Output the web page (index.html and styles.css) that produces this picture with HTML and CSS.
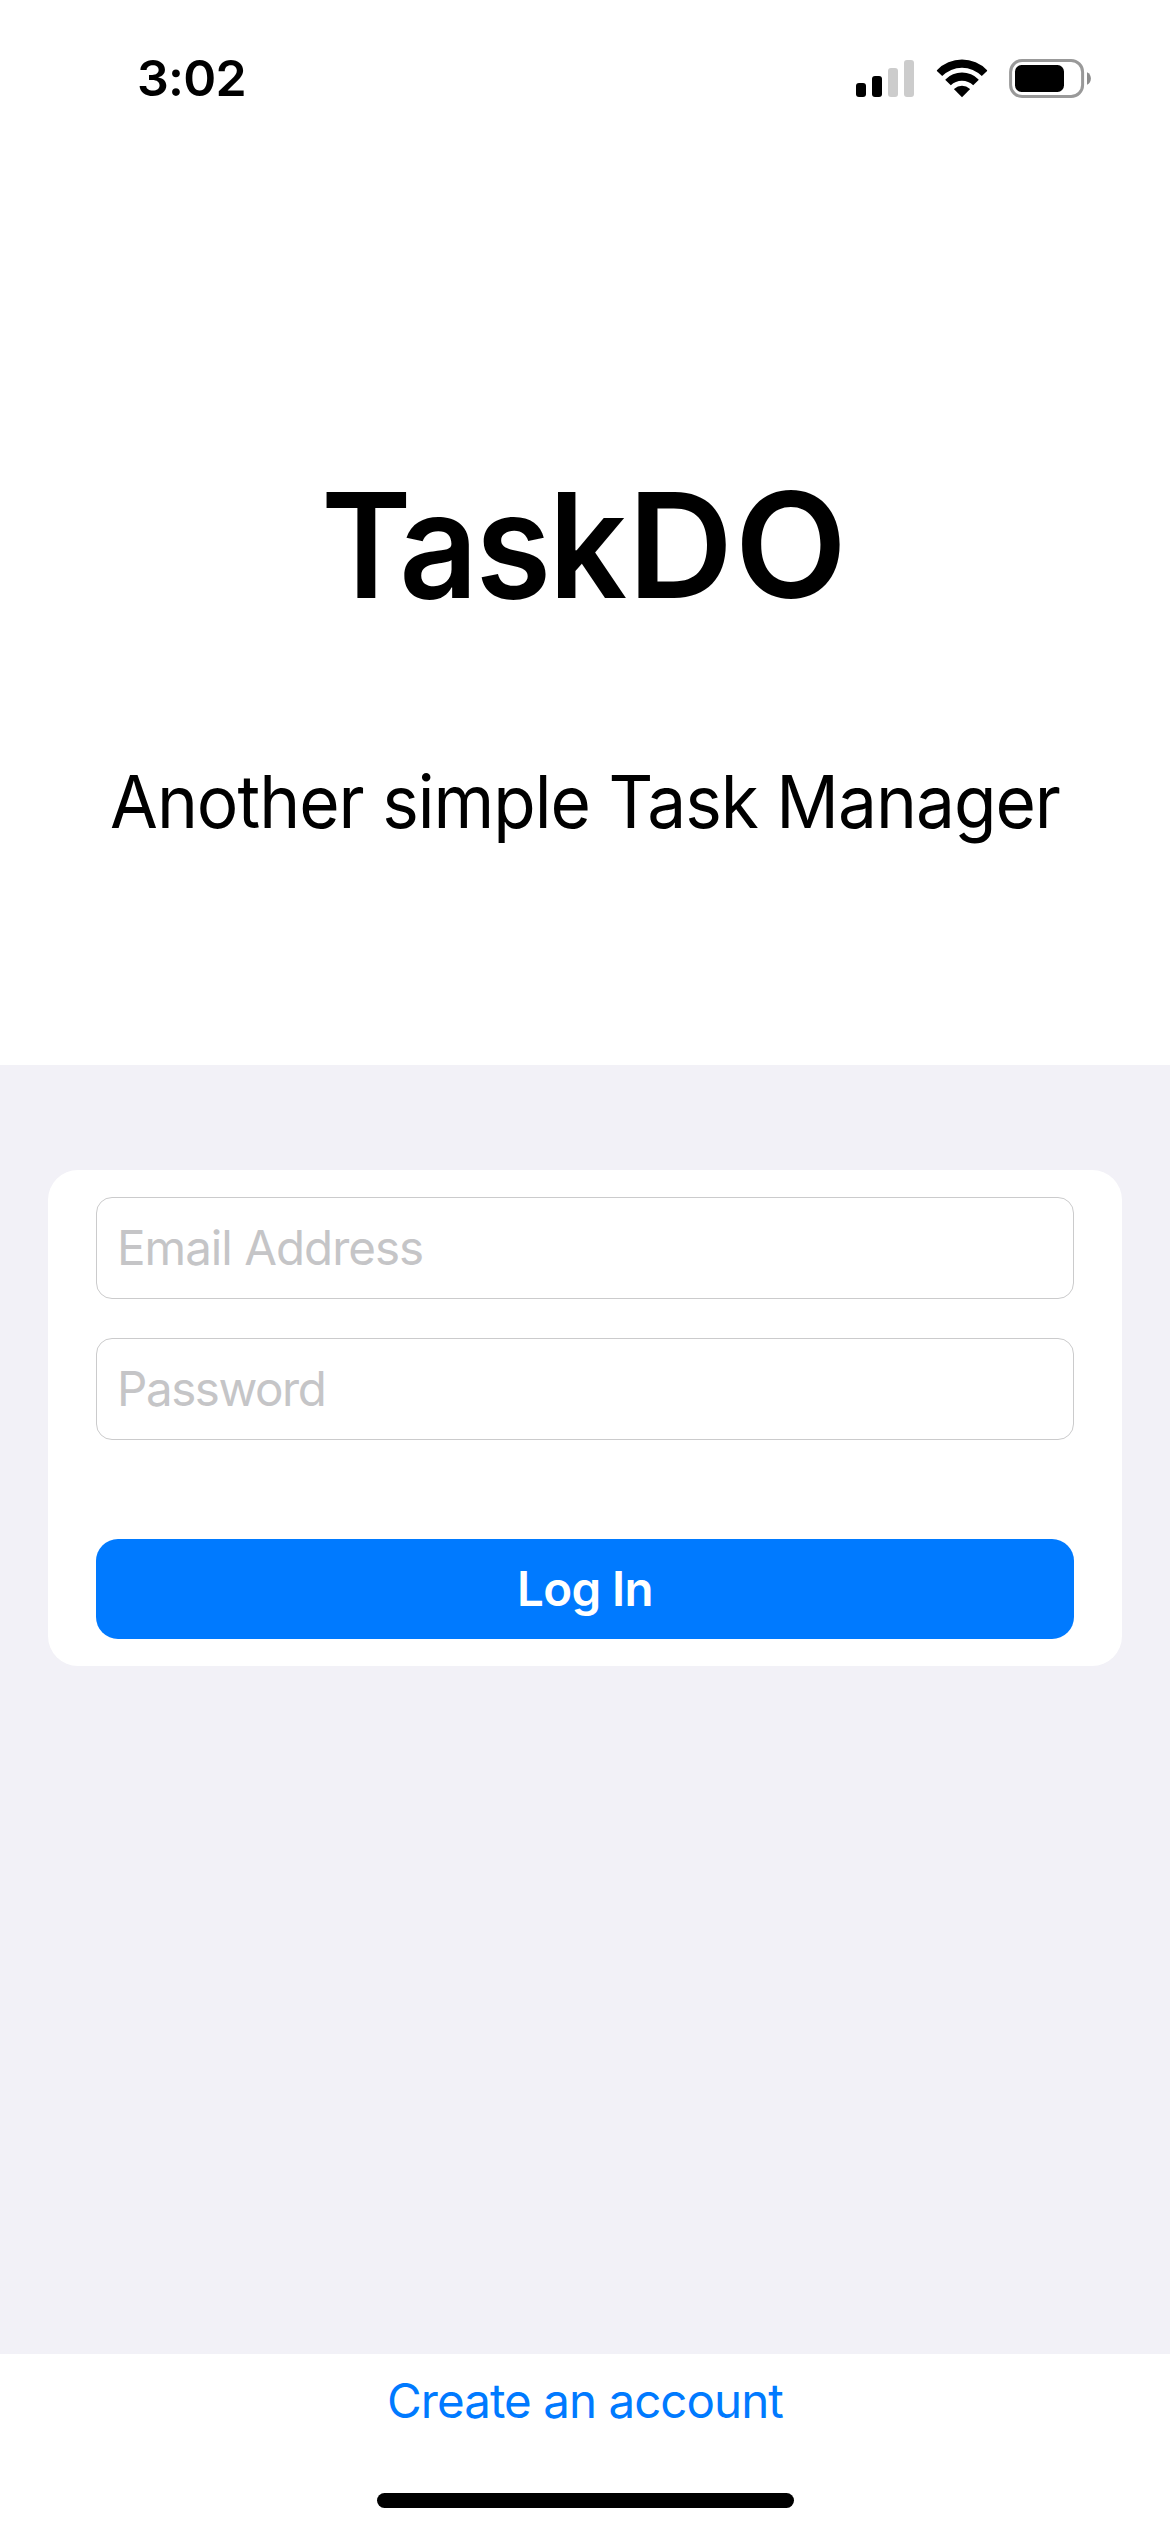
FILE: index.html
```html
<!DOCTYPE html>
<html lang="en">
<head>
<meta charset="utf-8">
<title>TaskDO</title>
<link rel="stylesheet" href="styles.css">
</head>
<body>
<div class="status-bar">
  <time class="clock">3:02</time>
  <div class="indicators">
    <svg width="58" height="40" viewBox="0 0 58 40" aria-label="Signal">
      <rect x="0" y="25" width="10" height="14" rx="3"/>
      <rect x="16" y="18" width="10" height="21" rx="3"/>
      <rect class="faint" x="32" y="10" width="10" height="29" rx="3"/>
      <rect class="faint" x="48" y="2" width="10" height="37" rx="3"/>
    </svg>
    <svg class="wifi" width="52" height="40" viewBox="0 0 52 40" aria-label="Wi-Fi">
      <path d="M.9 12.2A35 35 0 0 1 51.1 12.2L51.1 13L45.8 18.1A27.5 27.5 0 0 0 6.2 18.1L.9 13Z"/>
      <path d="M9.4 21.4A23.5 23.5 0 0 1 42.6 21.4L42.6 22.1L37.2 27.3A16 16 0 0 0 14.8 27.3L9.4 22.1Z"/>
      <path d="M18.3 30.8A11.5 11.5 0 0 1 33.7 30.8L33.7 31.4L26 39.3L18.3 31.4Z"/>
    </svg>
    <svg class="battery" width="83" height="40" viewBox="0 0 83 40" aria-label="Battery">
      <rect class="shell" x="1.6" y="2.5" width="72" height="36" rx="11.5"/>
      <rect x="6" y="7" width="49" height="27" rx="6.5"/>
      <path class="nub" d="M78 14.2C83.2 16.5 83.2 24.5 78 26.8Z"/>
    </svg>
  </div>
</div>
<header class="hero">
  <h1><span class="task">Task</span><span class="do">DO</span></h1>
  <p>Another simple Task Manager</p>
</header>
<main>
  <form class="card">
    <input class="email" type="email" placeholder="Email Address">
    <input class="password" type="password" placeholder="Password">
    <button type="button">Log In</button>
  </form>
</main>
<footer>
  <a>Create an account</a>
  <div class="home-indicator"></div>
</footer>
</body>
</html>
```
FILE: styles.css
```css
* { box-sizing: border-box; }

body {
  margin: 0;
  width: 1170px;
  height: 2532px;
  display: flex;
  flex-direction: column;
  background: #fff;
  color: #000;
  font-family: Inter, "Liberation Sans", sans-serif;
  font-size: 47.5px;
}

.status-bar {
  flex: none;
  height: 156px;
  padding: 0 78px 0 137px;
  display: flex;
  align-items: center;
  justify-content: space-between;
}

.clock {
  font-size: 50px;
  font-weight: 600;
  letter-spacing: -0.75px;
}

.indicators { display: flex; }
.indicators svg { display: block; }
.faint { fill: #ccc; }
.wifi { margin-left: 21.5px; }
.battery { margin-left: 21.5px; }
.shell { fill: none; stroke: #999; stroke-width: 3; }
.nub { fill: #8c8c8c; }

.hero {
  flex: none;
  height: 909px;
  padding-top: 299px;
  text-align: center;
}

h1 {
  margin: 0;
  font-size: 146px;
  font-weight: 600;
  line-height: 180px;
}

/* Slightly condensed lettering */
.task {
  display: inline-block;
  margin-right: -25.6px;
  letter-spacing: -2.5px;
  transform: scaleX(0.94);
  transform-origin: left;
}

.do { margin-left: 9px; letter-spacing: 1.6px; }

.hero p {
  margin: 121px 0 0;
  font-size: 73px;
  line-height: 91px;
  letter-spacing: -1.05px;
  white-space: nowrap;
  transform: scaleX(0.95);
}

main {
  flex: 1;
  padding: 105px 48px 0;
  background: #f2f1f7;
}

.card {
  display: flex;
  flex-direction: column;
  padding: 27px 48px;
  border-radius: 30px;
  background: #fff;
}

input {
  height: 102px;
  margin: 0 0 39px;
  padding: 0 20px 2px;
  border: 1px solid #cbcbcc;
  border-radius: 16px;
  background: #fff;
  font: inherit;
  letter-spacing: -1px;
}

input::placeholder { color: #c5c5c7; opacity: 1; }

.password {
  margin-bottom: 99px;
  letter-spacing: -1.44px;
}

button {
  height: 100px;
  padding: 0 0 2px;
  border: 0;
  border-radius: 22px;
  background: #007aff;
  color: #fff;
  font: inherit;
  font-weight: 600;
  letter-spacing: -0.6px;
}

footer {
  flex: none;
  height: 178px;
  padding-top: 17px;
  display: flex;
  flex-direction: column;
  align-items: center;
}

footer a {
  color: #007aff;
  line-height: 60px;
  letter-spacing: -0.95px;
}

.home-indicator {
  width: 417px;
  height: 15px;
  margin-top: 62px;
  border-radius: 8px;
  background: #000;
}
```
